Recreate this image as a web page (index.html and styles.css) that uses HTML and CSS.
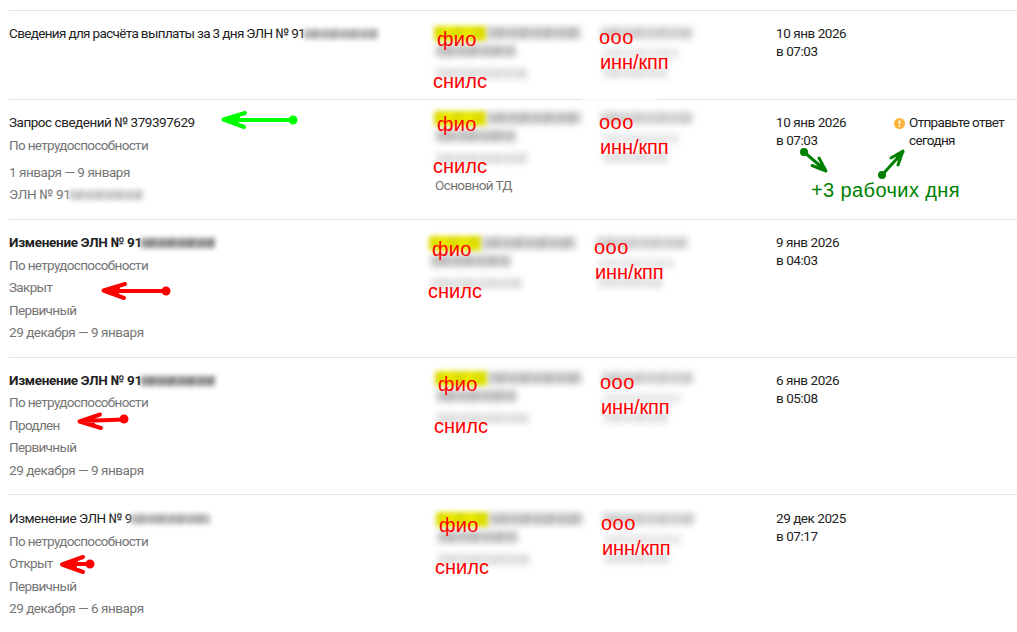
FILE: index.html
```html
<!DOCTYPE html>
<html lang="ru">
<head>
    <meta charset="UTF-8">
    <meta name="viewport" content="width=device-width, initial-scale=1.0">
    <title>ЭЛН</title>
    <link rel="stylesheet" href="styles.css">
</head>
<body>
    <div class="list">
        <div class="row row1">
            <div class="info">
                <p class="title t-long">Сведения для расчёта выплаты за 3 дня ЭЛН № 91<i class="hidden-num"></i></p>
            </div>
            <div class="person"></div>
            <div class="date">10 янв 2026<br>в 07:03</div>
            <div class="status"></div>
            <div class="stamp">
                <i class="mark"></i><i class="smear s1"></i><i class="smear s2"></i><i class="smear s3"></i>
                <i class="smear s4"></i><i class="smear s5"></i><i class="smear s6"></i>
                <b class="fio">фио</b><b class="snils">снилс</b><b class="ooo">ооо</b><b class="inn">инн/кпп</b>
            </div>
        </div>

        <div class="row row2">
            <div class="info">
                <p class="title">Запрос сведений № 379397629</p>
                <p>По нетрудоспособности</p>
                <p class="period gap">1 января — 9 января</p>
                <p class="eln">ЭЛН № 91<i class="hidden-num light"></i></p>
            </div>
            <div class="person">Основной ТД</div>
            <div class="date">10 янв 2026<br>в 07:03</div>
            <div class="status">
                <svg class="warn" width="11" height="11" viewBox="0 0 11 11">
                    <circle cx="5.5" cy="5.5" r="5.5" fill="#fcb43c"/>
                    <path d="M5.5 2.3v3.8M5.5 7.3v1.5" stroke="#fff" stroke-width="1.5"/>
                </svg>
                <span>Отправьте ответ<br>сегодня</span>
            </div>
            <div class="stamp">
                <i class="patch"></i>
                <i class="mark"></i><i class="smear s1"></i><i class="smear s2"></i><i class="smear s3"></i>
                <i class="smear s4"></i><i class="smear s5"></i><i class="smear s6"></i>
                <b class="fio">фио</b><b class="snils">снилс</b><b class="ooo">ооо</b><b class="inn">инн/кпп</b>
            </div>
        </div>

        <div class="row row3">
            <div class="info">
                <p class="title bold">Изменение ЭЛН № 91<i class="hidden-num dark"></i></p>
                <p>По нетрудоспособности</p>
                <p>Закрыт</p>
                <p>Первичный</p>
                <p class="period">29 декабря — 9 января</p>
            </div>
            <div class="person"></div>
            <div class="date">9 янв 2026<br>в 04:03</div>
            <div class="status"></div>
            <div class="stamp">
                <i class="mark"></i><i class="smear s1"></i><i class="smear s2"></i><i class="smear s3"></i>
                <i class="smear s4"></i><i class="smear s5"></i><i class="smear s6"></i>
                <b class="fio">фио</b><b class="snils">снилс</b><b class="ooo">ооо</b><b class="inn">инн/кпп</b>
            </div>
        </div>

        <div class="row row4">
            <div class="info">
                <p class="title bold">Изменение ЭЛН № 91<i class="hidden-num dark"></i></p>
                <p>По нетрудоспособности</p>
                <p>Продлен</p>
                <p>Первичный</p>
                <p class="period">29 декабря — 9 января</p>
            </div>
            <div class="person"></div>
            <div class="date">6 янв 2026<br>в 05:08</div>
            <div class="status"></div>
            <div class="stamp">
                <i class="mark"></i><i class="smear s1"></i><i class="smear s2"></i><i class="smear s3"></i>
                <i class="smear s4"></i><i class="smear s5"></i><i class="smear s6"></i>
                <b class="fio">фио</b><b class="snils">снилс</b><b class="ooo">ооо</b><b class="inn">инн/кпп</b>
            </div>
        </div>

        <div class="row row5">
            <div class="info">
                <p class="title">Изменение ЭЛН № 9<i class="hidden-num wide"></i></p>
                <p>По нетрудоспособности</p>
                <p>Открыт</p>
                <p>Первичный</p>
                <p class="period">29 декабря — 6 января</p>
            </div>
            <div class="person"></div>
            <div class="date">29 дек 2025<br>в 07:17</div>
            <div class="status"></div>
            <div class="stamp">
                <i class="mark"></i><i class="smear s1"></i><i class="smear s2"></i><i class="smear s3"></i>
                <i class="smear s4"></i><i class="smear s5"></i><i class="smear s6"></i>
                <b class="fio">фио</b><b class="snils">снилс</b><b class="ooo">ооо</b><b class="inn">инн/кпп</b>
            </div>
        </div>
    </div>

    <!-- arrows over the list -->
    <svg class="arrows" width="1017" height="632" viewBox="0 0 1017 632">
        <g stroke="#00ff00">
            <path d="M293 120H226M245 113L223.500 119.500L244 127M238 117L228 119.500L237 123"/>
            <circle cx="293" cy="120" r="2.5"/>
        </g>
        <g stroke="#ff0000">
            <path d="M166 291H106M125 284L103.500 290.500L124 298M118 288L108 290.500L117 294"/>
            <circle cx="166" cy="291" r="2.5"/>
            <path d="M124 419.500L82 421M100 414.500L79.500 421.500L101 428M93 418.500L84 421.500L93 424"/>
            <circle cx="124" cy="419" r="2.5"/>
            <path d="M90 564H66M83 557L62 564.500L83 572M76 561.500L66 564.500L75 567.500"/>
            <circle cx="90" cy="564" r="2.5"/>
        </g>
        <g class="green" stroke="#008000">
            <path d="M804 152L825 170M819 158L826 171L812 165.500M821 165L824 170L818 167"/>
            <circle cx="804" cy="152" r="2.5"/>
            <path d="M882 175L903 152M891 158L903 151L898 165M897 156L902 152L899 160"/>
            <circle cx="882" cy="175" r="2.5"/>
        </g>
    </svg>
    <div class="days">+3 рабочих дня</div>
</body>
</html>
```
FILE: styles.css
```css
body {
    margin: 0;
    width: 1017px;
    height: 632px;
    overflow: hidden;
    position: relative;
    background: #fff;
    font-family: Roboto, "Liberation Sans", sans-serif;
    font-size: 13.5px;
    line-height: 18px;
    letter-spacing: -0.45px;
    color: #222;
}

.list {
    padding: 10px 0 0 9px;
}

.row {
    display: grid;
    grid-template-columns: 426px 341px 117px 1fr;
    position: relative;
    box-sizing: border-box;
    height: 137.5px;
    padding-top: 13px;
    border-top: 1px solid #e4e4e4;
}

.row1 {
    height: 89px;
}

.row2 {
    height: 120px;
}

.row5 {
    padding-top: 14px;
}

.info p {
    margin: 0 0 4.5px;
    color: #757575;
    white-space: nowrap;
    letter-spacing: -0.66px;
}

.info p.title {
    color: #222;
    letter-spacing: -0.47px;
}

.info p.t-long {
    letter-spacing: -0.65px;
}

.info p.bold {
    font-weight: 700;
    letter-spacing: -0.3px;
}

.info p.period {
    letter-spacing: -0.46px;
}

.info p.gap {
    margin-top: 9px;
}

.info p.eln {
    letter-spacing: -0.3px;
}

.row2 .person {
    padding-top: 63px;
    color: #757575;
    letter-spacing: -0.6px;
}

.status {
    display: flex;
    gap: 5px;
    white-space: nowrap;
    letter-spacing: -0.65px;
}

.warn {
    margin: 5px 0 0 1px;
}

.status span {
    margin-left: -1px;
}

/* smeared numbers */
.hidden-num {
    display: inline-block;
    width: 74px;
    height: 10px;
    margin-left: -1px;
    vertical-align: -1px;
    background: repeating-linear-gradient(105deg, #b0b0b0 0 5px, #c0c0c0 5px 8px, #acacac 8px 15px, #c6c6c6 15px 19px);
    filter: blur(2.5px);
}

.hidden-num.light {
    background: repeating-linear-gradient(105deg, #c8c8c8 0 5px, #d8d8d8 5px 8px, #c4c4c4 8px 15px, #dadada 15px 19px);
}

.hidden-num.dark {
    background: repeating-linear-gradient(105deg, #8c8c8c 0 5px, #a4a4a4 5px 8px, #888 8px 15px, #aaa 15px 19px);
}

.hidden-num.wide {
    width: 79px;
}

/* marks over person and company */
.stamp {
    position: absolute;
    left: 424px;
    top: 15px;
    width: 270px;
    height: 65px;
    letter-spacing: 0;
}

.row2 .stamp { top: 11px; }
.row3 .stamp { left: 419px; top: 16px; }
.row4 .stamp { left: 425px; top: 13px; }
.row5 .stamp { left: 426px; top: 17px; }

.stamp i, .stamp b {
    position: absolute;
}

.stamp b {
    font-family: "Liberation Sans", Arial, sans-serif;
    font-size: 20px;
    line-height: 22px;
    font-weight: 400;
    color: #ff0000;
}

.fio { left: 4px; top: 2px; letter-spacing: 0.3px; }
.snils { left: 0; top: 44px; }
.ooo { left: 166px; top: 0; letter-spacing: 0.5px; }
.inn { left: 167px; top: 25px; letter-spacing: -0.1px; }

.mark {
    left: 1px;
    top: 0;
    width: 53px;
    height: 15px;
    border-radius: 3px;
    background: repeating-linear-gradient(105deg, #dcdc00 0 9px, #e8e800 9px 20px);
    filter: blur(2.5px);
}

.smear {
    background: repeating-linear-gradient(105deg, #bebebe 0 6px, #cacaca 6px 10px, #bababa 10px 19px, #d2d2d2 19px 23px);
    filter: blur(3px);
}

.s1 { left: 54px; top: 1px; width: 94px; height: 12px; }
.s2 { left: 3px; top: 19px; width: 80px; height: 12px; }
.s3 { left: 3px; top: 42px; width: 92px; height: 11px; opacity: 0.5; }
.s4 { left: 168px; top: 1px; width: 92px; height: 12px; opacity: 0.75; }
.s5 { left: 170px; top: 22px; width: 76px; height: 11px; opacity: 0.35; }
.s6 { left: 170px; top: 41px; width: 64px; height: 11px; opacity: 0.45; }

.stamp .patch {
    left: 147px;
    top: -13px;
    width: 78px;
    height: 4px;
    background: #fbfbfb;
}

.arrows {
    position: absolute;
    left: 0;
    top: 0;
    fill: none;
    stroke-width: 4;
    stroke-linecap: round;
    stroke-linejoin: round;
}

.arrows .green {
    stroke-width: 3;
}

.days {
    position: absolute;
    left: 811px;
    top: 178px;
    font-family: "Liberation Sans", Arial, sans-serif;
    font-size: 20px;
    line-height: 24px;
    letter-spacing: 0.4px;
    color: #008000;
    white-space: nowrap;
}
```
